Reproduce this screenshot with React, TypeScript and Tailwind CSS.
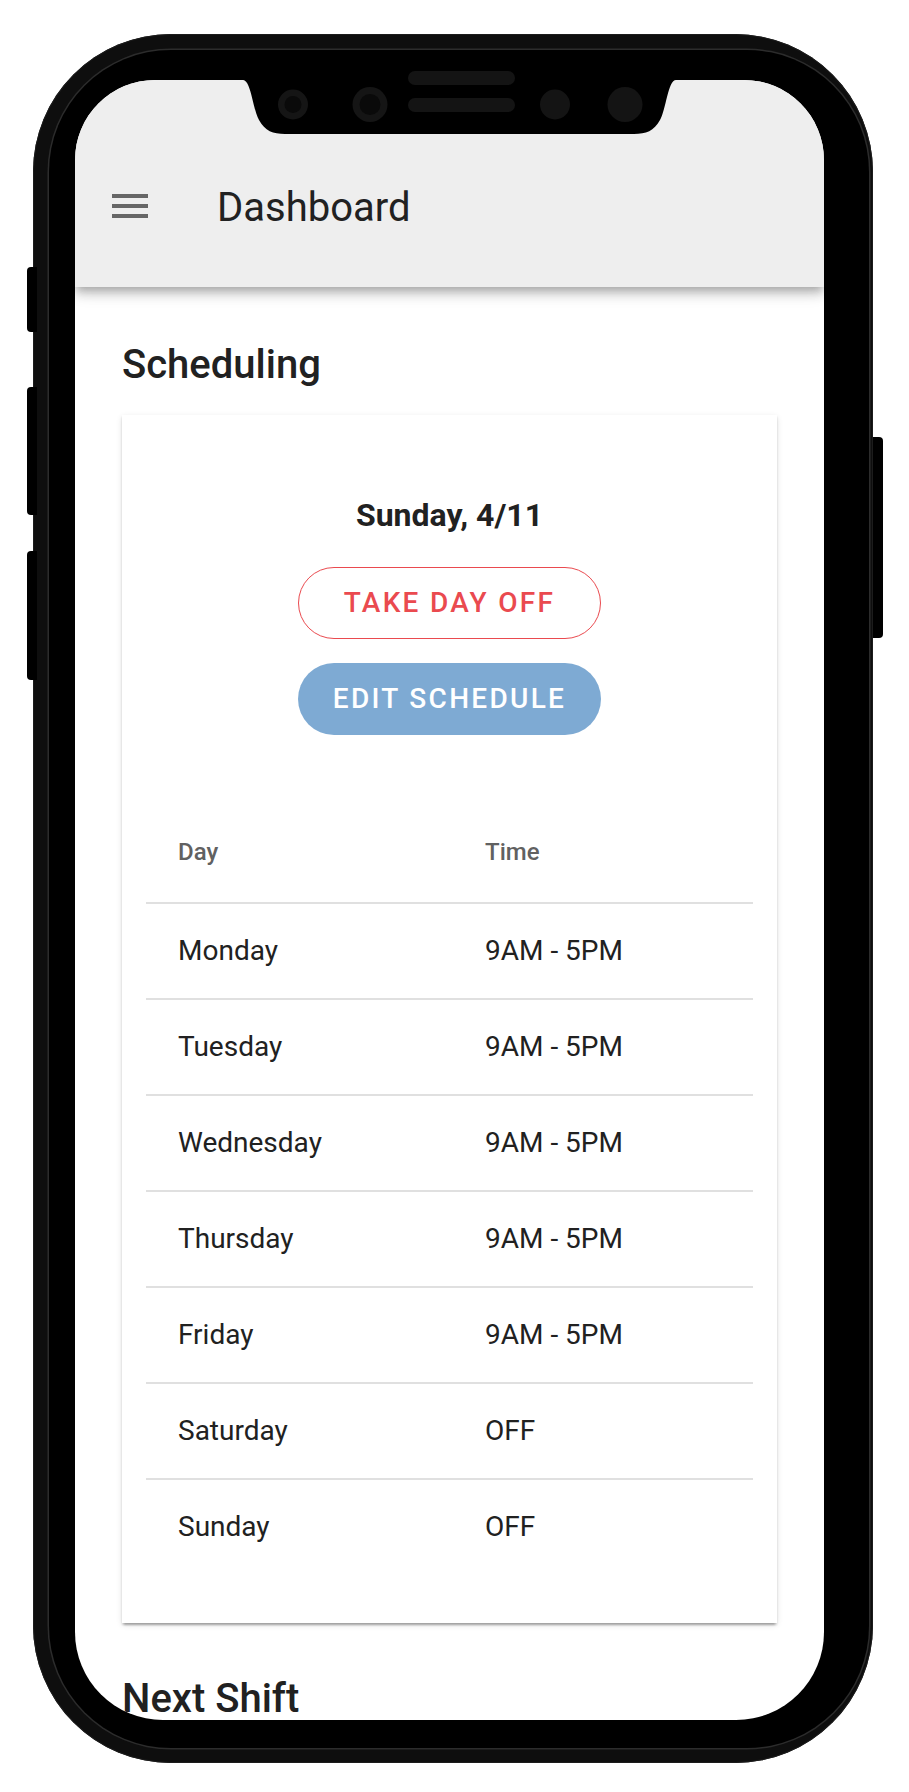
import React from "react";

const rows: [string, string][] = [
  ["Monday", "9AM - 5PM"],
  ["Tuesday", "9AM - 5PM"],
  ["Wednesday", "9AM - 5PM"],
  ["Thursday", "9AM - 5PM"],
  ["Friday", "9AM - 5PM"],
  ["Saturday", "OFF"],
  ["Sunday", "OFF"],
];

function Notch() {
  return (
    <svg
      className="absolute left-[194px] top-[15px] z-20"
      width="433"
      height="70"
      viewBox="0 0 433 70"
    >
      <path
        d="M0,0 L433,0 L433,15 C425,15 423,45 417,55 C411,66 403,69 391,69 L42,69 C30,69 22,66 16,55 C10,45 8,15 0,15 Z"
        fill="#000"
      />
      <rect x="165" y="6" width="107" height="14" rx="7" fill="#141414" />
      <rect x="165" y="33" width="107" height="14" rx="7" fill="#141414" />
      <circle cx="50" cy="39.5" r="15" fill="#151515" />
      <circle cx="50" cy="39.5" r="8.5" fill="#0a0a0a" />
      <circle cx="127" cy="39.5" r="17.5" fill="#151515" />
      <circle cx="127" cy="39.5" r="10.5" fill="#0a0a0a" />
      <circle cx="312" cy="39.5" r="15" fill="#141414" />
      <circle cx="382" cy="39.5" r="17.5" fill="#141414" />
    </svg>
  );
}

export default function App() {
  return (
    <div className="relative w-[909px] h-[1792px] bg-white overflow-hidden pt-[34px] pl-[33px] font-['Roboto',sans-serif]">
      {/* side buttons */}
      <div className="absolute left-[27px] top-[267px] w-[10px] h-[65px] bg-black rounded-l-[4px] z-10" />
      <div className="absolute left-[27px] top-[387px] w-[10px] h-[128px] bg-black rounded-l-[4px] z-10" />
      <div className="absolute left-[27px] top-[551px] w-[10px] h-[129px] bg-black rounded-l-[4px] z-10" />
      <div className="absolute left-[871px] top-[437px] w-[12px] h-[201px] bg-black rounded-r-[4px]" />

      {/* phone shell */}
      <div className="relative w-[840px] h-[1729px] rounded-[138px] bg-[#0e0e0e] pt-[16px] pl-[16px] pr-[4px] pb-[15px] shadow-[inset_0_0_0_1px_#1c1c1c]">
        <div className="relative w-full h-full rounded-[122px] bg-black pl-[26px] pt-[30px] pr-[45px] pb-[28px] shadow-[0_0_0_1.5px_#2c2c2c]">
          <Notch />
          <div className="w-full h-full rounded-t-[80px] rounded-b-[88px] overflow-hidden bg-white flex flex-col">
            {/* app bar */}
            <div className="relative z-10 shrink-0 h-[207px] bg-[#eeeeee] shadow-[0_4px_8px_-2px_rgba(0,0,0,0.2),0_8px_10px_0_rgba(0,0,0,0.14),0_2px_20px_0_rgba(0,0,0,0.12)] flex items-start pt-[108px] pl-[37px]">
              <div className="w-[36px] mt-[6px] flex flex-col gap-[6px]">
                <div className="h-[4px] bg-[#666666]" />
                <div className="h-[4px] bg-[#666666]" />
                <div className="h-[4px] bg-[#666666]" />
              </div>
              <div className="ml-[69px] text-[40px] leading-none text-[#212121]">
                Dashboard
              </div>
            </div>

            {/* content */}
            <div className="px-[47px] flex flex-col">
              <div className="mt-[58px] text-[40px] font-medium leading-none text-[#212121]">
                Scheduling
              </div>

              <div className="mt-[30px] bg-white px-[24px] pt-[84px] pb-[49px] shadow-[0_4px_2px_-2px_rgba(0,0,0,0.2),0_2px_2px_0_rgba(0,0,0,0.14),0_2px_6px_0_rgba(0,0,0,0.12)]">
                <div className="text-center text-[32px] font-bold leading-none text-[#212121]">
                  Sunday, 4/11
                </div>
                <div className="flex flex-col items-center">
                  <button className="mt-[36px] w-[303px] h-[72px] rounded-full border border-[#ea4a4f] bg-white text-[#ea4a4f] text-[28px] font-medium tracking-[2.3px] leading-none flex items-center justify-center">
                    TAKE DAY OFF
                  </button>
                  <button className="mt-[24px] w-[303px] h-[72px] rounded-full bg-[#7eaad3] text-white text-[28px] font-medium tracking-[2.3px] leading-none flex items-center justify-center">
                    EDIT SCHEDULE
                  </button>
                </div>

                <div className="mt-[105px] grid grid-cols-[307px_1fr] pb-[38px] border-b-2 border-[#e0e0e0] text-[24px] font-medium leading-none text-[#616161]">
                  <div className="pl-[32px]">Day</div>
                  <div className="pl-[32px]">Time</div>
                </div>
                {rows.map(([d, t], i) => (
                  <div
                    key={d}
                    className={
                      i < rows.length - 1
                        ? "grid grid-cols-[307px_1fr] items-center h-[96px] border-b-2 border-[#e0e0e0] text-[28px] leading-none text-[#212121]"
                        : "grid grid-cols-[307px_1fr] items-center h-[94px] text-[28px] leading-none text-[#212121]"
                    }
                  >
                    <div className="pl-[32px]">{d}</div>
                    <div className="pl-[32px]">{t}</div>
                  </div>
                ))}
              </div>

              <div className="mt-[56px] text-[40px] font-medium leading-none text-[#212121]">
                Next Shift
              </div>
            </div>
          </div>
        </div>
      </div>
    </div>
  );
}
